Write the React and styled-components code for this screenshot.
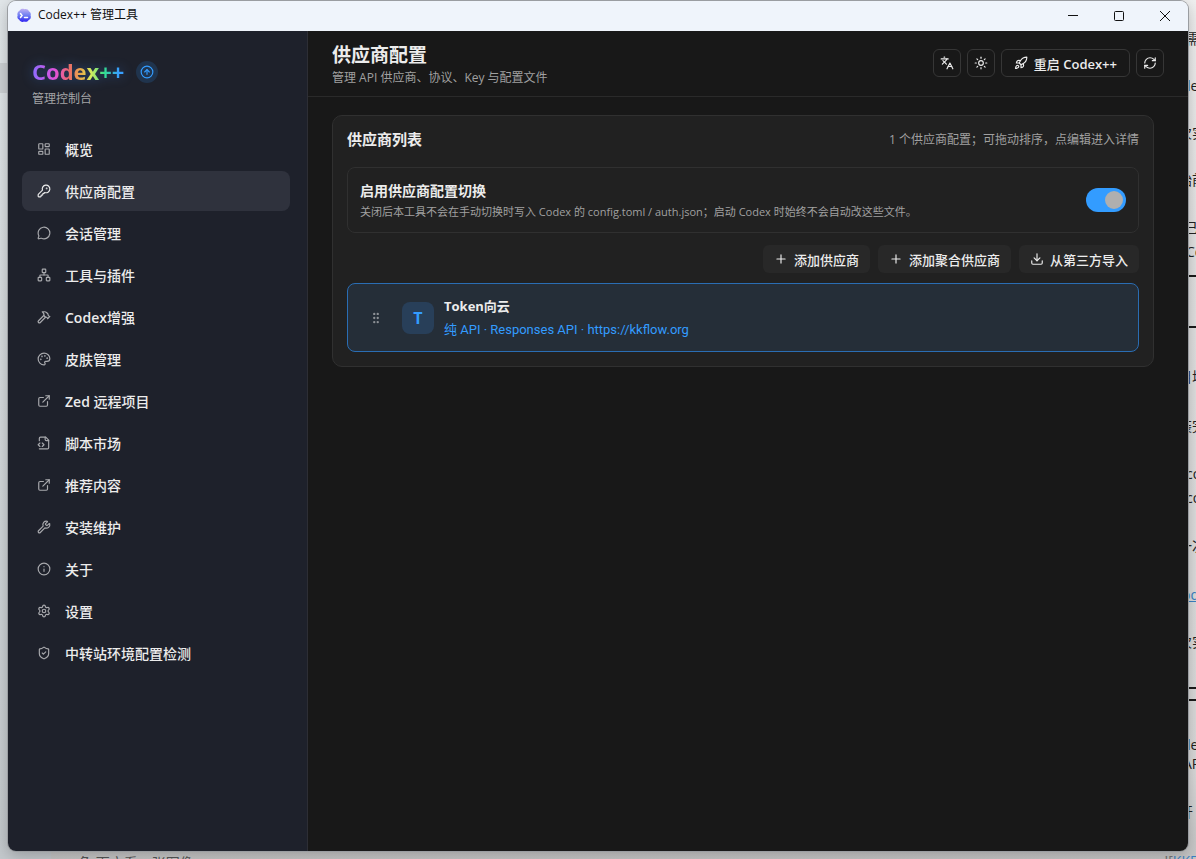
import React from 'react';
import styled, { createGlobalStyle, css } from 'styled-components';
import {
  LayoutDashboard, KeyRound, MessageCircle, Network, Hammer, Palette, ExternalLink,
  Wrench, Info, Settings, ShieldCheck, CircleArrowUp, Languages, Sun, Rocket, RefreshCw,
  Plus, Download, GripVertical,
} from 'lucide-react';

const FileCode = ({ size }) => (
  <svg width={size} height={size} viewBox="0 0 24 24" fill="none" stroke="currentColor" strokeWidth="2" strokeLinecap="round" strokeLinejoin="round">
    <path d="M4 22h14a2 2 0 0 0 2-2V7l-5-5H6a2 2 0 0 0-2 2v4"/>
    <path d="M14 2v4a2 2 0 0 0 2 2h4"/>
    <path d="m5 12-3 3 3 3"/>
    <path d="m9 18 3-3-3-3"/>
  </svg>
);

const menu = [
  { label: '概览', Icon: LayoutDashboard },
  { label: '供应商配置', Icon: KeyRound, active: true },
  { label: '会话管理', Icon: MessageCircle },
  { label: '工具与插件', Icon: Network },
  { latin: 'Codex', label: '增强', Icon: Hammer },
  { label: '皮肤管理', Icon: Palette },
  { latin: 'Zed', label: ' 远程项目', Icon: ExternalLink },
  { label: '脚本市场', Icon: FileCode },
  { label: '推荐内容', Icon: ExternalLink },
  { label: '安装维护', Icon: Wrench },
  { label: '关于', Icon: Info },
  { label: '设置', Icon: Settings },
  { label: '中转站环境配置检测', Icon: ShieldCheck },
];

// pieces of the document that lies under the window, cut by its right edge
const snippets = [
  { top: 29, right: 10, text: '需' },
  { top: 76, right: 14, text: 'de' },
  { top: 123, right: 18, text: '次实' },
  { top: 170, right: 18, text: '始前' },
  { top: 218, right: 12, text: '已' },
  { top: 242, right: 10, text: 'Co' },
  { top: 367, right: 18, text: '目增' },
  { top: 416, right: 18, text: '装完' },
  { top: 464, right: 10, text: 'co' },
  { top: 488, right: 10, text: 'co' },
  { top: 536, right: 18, text: '一次' },
  { top: 585, right: 14, text: 'od', link: true },
  { top: 632, right: 18, text: '次实' },
  { top: 735, right: 14, text: 'de' },
  { top: 754, right: 13, text: 'API' },
  { top: 802, right: 17, text: '开' },
];
const rules = [275, 326, 687, 699];

const App = () => {
  return (
    <Desktop>
      <Global/>
      <Shade/>
      <Backdrop aria-hidden="true">
        {snippets.map(({ top, right, text, link }) => (
          <Snippet key={top} $link={link} style={{ top, left: `calc(100% - ${right}px)` }}>{text}</Snippet>
        ))}
        {rules.map((top) => <Rule key={top} style={{ top }}/>)}
        <Footnote>角 下方看一张图像</Footnote>
        <FootLink><i>![</i>KKFlow</FootLink>
      </Backdrop>
      <Window>
        <TitleBar>
          <AppIcon/>
          <span>Codex++ 管理工具</span>
          <Caption aria-label="最小化">
            <svg viewBox="0 0 10 10"><path d="M0 4.5h10"/></svg>
          </Caption>
          <Caption aria-label="最大化">
            <svg viewBox="0 0 10 10"><rect x=".5" y=".5" width="9" height="9" rx="1"/></svg>
          </Caption>
          <Caption aria-label="关闭">
            <svg viewBox="0 0 10 10"><path d="M0 0l10 10M10 0L0 10"/></svg>
          </Caption>
        </TitleBar>
        <Body>
          <Sidebar>
            <Brand>
              <div>
                <Logo>Codex++</Logo>
                <Update aria-label="更新"><CircleArrowUp size={14}/></Update>
              </div>
              <p>管理控制台</p>
            </Brand>
            <Nav>
              {menu.map(({ label, latin, Icon, active }) => (
                <NavItem key={label} $active={active}>
                  <Icon size={14}/>
                  <span>{latin && <b>{latin}</b>}{label}</span>
                </NavItem>
              ))}
            </Nav>
          </Sidebar>
          <Main>
            <Header>
              <div>
                <h1>供应商配置</h1>
                <p>管理 API 供应商、协议、Key 与配置文件</p>
              </div>
              <Tools>
                <Button $icon aria-label="语言"><Languages size={14}/></Button>
                <Button $icon aria-label="主题"><Sun size={14}/></Button>
                <Button><Rocket size={14}/><span>重启 <b>Codex++</b></span></Button>
                <Button $icon aria-label="刷新"><RefreshCw size={14}/></Button>
              </Tools>
            </Header>
            <Card>
              <CardHead>
                <h2>供应商列表</h2>
                <span>1 个供应商配置；可拖动排序，点编辑进入详情</span>
              </CardHead>
              <Setting>
                <label htmlFor="switching">
                  <strong>启用供应商配置切换</strong>
                  <small>关闭后本工具不会在手动切换时写入 Codex 的 config.toml / auth.json；启动 Codex 时始终不会自动改这些文件。</small>
                </label>
                <Toggle id="switching" type="checkbox" defaultChecked/>
              </Setting>
              <Actions>
                <Button $soft><Plus size={14}/>添加供应商</Button>
                <Button $soft><Plus size={14}/>添加聚合供应商</Button>
                <Button $soft><Download size={14}/>从第三方导入</Button>
              </Actions>
              <Provider>
                <GripVertical size={14}/>
                <Avatar>T</Avatar>
                <div>
                  <strong>Token向云</strong>
                  <p>纯 API · Responses API · https://kkflow.org</p>
                </div>
              </Provider>
            </Card>
          </Main>
        </Body>
      </Window>
    </Desktop>
  );
};

export default App;

const AppIcon = () => (
  <svg width="16" height="16" viewBox="0 0 16 16">
    <defs>
      <linearGradient id="cloud" x1="0" y1="0" x2="0" y2="1">
        <stop offset="0" stopColor="#c0b0f2"/>
        <stop offset=".5" stopColor="#6f7ff2"/>
        <stop offset="1" stopColor="#2f22f0"/>
      </linearGradient>
    </defs>
    <path fill="url(#cloud)" d="M4 2.200C5 .8 7 .4 8.300 1.200c1.700-.8 4 0 4.600 2 1.600.8 2.300 2.600 1.700 4.200.8 1.700 0 3.900-1.900 4.500-.9 1.700-3 2.300-4.600 1.600-1.700.9-4 .2-4.800-1.700C1.500 11 .9 9.200 1.600 7.600.8 5.600 2 3.200 4 2.200z"/>
    <path d="M4.500 5.500L6 7.500 4.500 9.500M8.500 9.500h3" stroke="#fff" strokeWidth="1.500" fill="none" strokeLinecap="round"/>
  </svg>
);

const Global = createGlobalStyle`
  * {
    box-sizing: border-box;
  }

  body {
    margin: 0;
    font-family: 'Open Sans', 'Noto Sans CJK SC', sans-serif;
  }

  h1, h2, p {
    margin: 0;
  }

  button {
    font-family: inherit;
    border: none;
    background: transparent;
    color: inherit;
    padding: 0;
  }

  svg {
    flex-shrink: 0;
  }
`

const Desktop = styled.div`
  position: relative;
  display: flex;
  height: 100vh;
  padding: 1px 8px 8px;
  overflow: hidden;
  background: linear-gradient(#e2e7ea, #d4d9dc 50%, #c4c9cd);
`

const Shade = styled.div`
  position: absolute;
  top: 63px;
  left: 0;
  width: 8px;
  height: 30px;
  background: #cdd1d4;
`

const Backdrop = styled.div`
  position: absolute;
  inset: 0 0 0 51px;
  background: linear-gradient(#f0f0f0, #e2e2e2 30%, #dadada 90%, #c6c6c6);
  color: #222;
  font-size: 14px;
  line-height: 20px;
  white-space: nowrap;
`

const Snippet = styled.span`
  position: absolute;
  color: ${({ $link }) => ($link ? '#3c82c4' : '#222')};
  text-decoration: ${({ $link }) => ($link ? 'underline' : 'none')};
`

const Rule = styled.i`
  position: absolute;
  right: 0;
  width: 12px;
  height: 2px;
  background: #1a1a1a;
`

const Footnote = styled.span`
  position: absolute;
  left: 27px;
  top: calc(100% - 6px);
  color: #555;
`

const FootLink = styled.span`
  position: absolute;
  right: -24px;
  top: calc(100% - 8px);
  color: #3c82c4;

  i {
    font-style: normal;
    color: #777;
  }
`

const Window = styled.div`
  position: relative;
  flex: 1;
  display: flex;
  flex-direction: column;
  border-radius: 8px;
  overflow: hidden;
  box-shadow: 0 0 0 1px #9a9da1, 0 4px 16px #00000040;
`

const TitleBar = styled.div`
  display: flex;
  align-items: center;
  height: 30px;
  padding-left: 8px;
  background: #eff4fb;
  color: #111;
  font-size: 12px;
  line-height: 18px;

  span {
    margin: 0 auto 0 6px;
    padding-bottom: 2px;
  }
`

const Caption = styled.button`
  width: 46px;
  height: 30px;
  display: grid;
  place-items: center;

  svg {
    width: 10px;
    height: 10px;
    fill: none;
    stroke: #111;
    overflow: visible;
  }
`

const Body = styled.div`
  flex: 1;
  display: flex;
  min-height: 0;
`

const Sidebar = styled.aside`
  width: 300px;
  flex-shrink: 0;
  background: #1e212b;
  border-right: 1px solid #2d2e35;
  padding: 27px 17px 0 14px;
`

const Brand = styled.div`
  padding-left: 10px;
  height: 71px;

  div {
    display: flex;
    align-items: center;
    gap: 12px;
    height: 28px;
  }

  p {
    margin-top: 4px;
    font-size: 12px;
    line-height: 18px;
    color: #a3a4a6;
  }
`

const Logo = styled.span`
  padding-bottom: 2px;
  font-size: 22px;
  font-weight: 700;
  line-height: 28px;
  color: transparent;
  background: linear-gradient(90deg, #8b6cff, #e052dc 25%, #ec6a6a 40%, #e8b04a 54%, #d6ea5c 64%, #34e08c 78%, #38a0ff 94%);
  background-clip: text;
  filter: drop-shadow(0 0 6px #3c8cff66);
`

const Update = styled.button`
  width: 22px;
  height: 22px;
  display: grid;
  place-items: center;
  border-radius: 50%;
  background: #20344d;
  color: #339cff;
`

const Nav = styled.nav`
  display: flex;
  flex-direction: column;
  gap: 2px;
`

const NavItem = styled.button`
  display: flex;
  align-items: center;
  gap: 14px;
  height: 40px;
  padding: 0 15px;
  border-radius: 8px;
  background: ${({ $active }) => ($active ? '#2f323d' : 'transparent')};
  color: #ececec;
  font-size: 14px;
  font-weight: 500;
  white-space: pre;

  b {
    font-weight: 600;
  }

  svg {
    color: ${({ $active }) => ($active ? '#ececec' : '#a8a9ad')};
  }
`

const Main = styled.main`
  flex: 1;
  min-width: 0;
  background: #181818;
`

const Header = styled.header`
  display: flex;
  justify-content: space-between;
  height: 66px;
  padding: 12px 24px 0;
  border-bottom: 1px solid #2a2a2a;

  h1 {
    font-size: 19px;
    line-height: 24px;
    color: #ececec;
  }

  p {
    margin-top: 1px;
    font-size: 12px;
    line-height: 20px;
    color: #a0a0a0;
  }
`

const Tools = styled.div`
  display: flex;
  gap: 6px;
  margin-top: 6px;
`

const Button = styled.button`
  display: flex;
  align-items: center;
  justify-content: center;
  gap: 6px;
  height: 28px;
  padding: 0 12px;
  border: 1px solid #363636;
  border-radius: 6px;
  color: #ececec;
  font-size: 13px;
  font-weight: 500;

  b {
    font-weight: 600;
  }

  ${({ $icon }) => $icon && css`
    width: 28px;
    padding: 0;
  `}

  ${({ $soft }) => $soft && css`
    padding: 0 10px;
    border-color: transparent;
    background: #282828;
  `}
`

const Card = styled.section`
  margin: 18px 34px 0 24px;
  padding: 14px;
  border: 1px solid #303030;
  border-radius: 10px;
  background: #212121;
`

const CardHead = styled.div`
  display: flex;
  align-items: center;
  justify-content: space-between;
  height: 18px;
  margin-bottom: 19px;

  h2 {
    font-size: 15px;
    line-height: 18px;
    color: #ececec;
  }

  span {
    font-size: 12px;
    color: #a0a0a0;
  }
`

const Setting = styled.div`
  display: flex;
  align-items: center;
  justify-content: space-between;
  height: 66px;
  padding: 0 12px;
  border: 1px solid #303030;
  border-radius: 8px;

  label {
    display: flex;
    flex-direction: column;
    padding-top: 2px;
  }

  strong {
    font-size: 14px;
    line-height: 22px;
    color: #ececec;
  }

  small {
    font-size: 11px;
    line-height: 20px;
    color: #a0a0a0;
  }
`

const Toggle = styled.input`
  appearance: none;
  flex-shrink: 0;
  width: 40px;
  height: 24px;
  margin: 0;
  padding: 3px;
  border-radius: 12px;
  background: #555;
  display: flex;

  &:before {
    content: '';
    width: 18px;
    height: 18px;
    border-radius: 50%;
    background: #afafaf;
  }

  &:checked {
    background: #339cff;
    justify-content: flex-end;
  }
`

const Actions = styled.div`
  display: flex;
  justify-content: flex-end;
  gap: 8px;
  margin: 12px 0 10px;
`

const Provider = styled.div`
  display: flex;
  align-items: center;
  padding: 10px 21px;
  border: 1px solid #2a6db3;
  border-radius: 8px;
  background: #252e38;
  color: #8d9196;

  strong {
    display: block;
    font-size: 13px;
    line-height: 24px;
    color: #ececec;
  }

  p {
    font-family: Roboto, 'Noto Sans CJK SC', sans-serif;
    font-size: 13px;
    line-height: 23px;
    color: #339cff;
  }
`

const Avatar = styled.div`
  width: 32px;
  height: 32px;
  margin: 0 10px 0 19px;
  display: grid;
  place-items: center;
  border-radius: 8px;
  background: #283f59;
  color: #339cff;
  font-size: 16px;
  font-weight: 700;
`
